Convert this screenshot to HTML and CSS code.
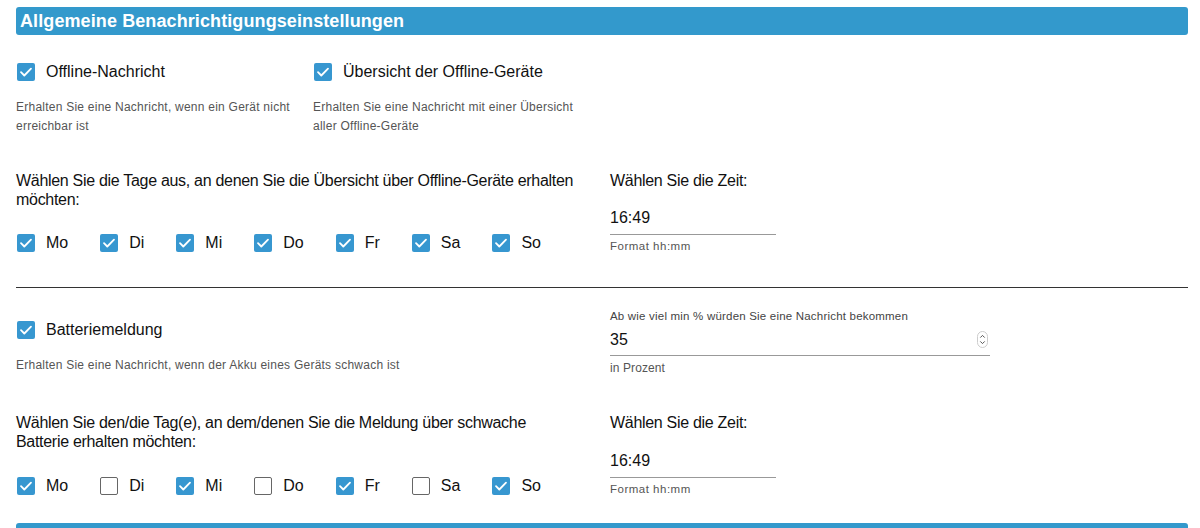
FILE: index.html
```html
<!DOCTYPE html>
<html lang="de">
<head>
  <meta charset="UTF-8">
  <meta name="viewport" content="width=device-width, initial-scale=1.0">
  <title>Benachrichtigungseinstellungen</title>
  <link rel="stylesheet" href="styles.css">
</head>
<body>

  <div class="page">
    <h2 class="section-title">Allgemeine Benachrichtigungseinstellungen</h2>

    <!-- Offline -->
    <div class="options">
      <div class="option">
        <label class="check"><span class="box checked"><svg viewBox="0 0 18 18"><path d="M4 9.2l3.3 3.3L14 5.6"/></svg></span>Offline-Nachricht</label>
        <p class="hint">Erhalten Sie eine Nachricht, wenn ein Gerät nicht erreichbar ist</p>
      </div>
      <div class="option option-wide">
        <label class="check"><span class="box checked"><svg viewBox="0 0 18 18"><path d="M4 9.2l3.3 3.3L14 5.6"/></svg></span>Übersicht der Offline-Geräte</label>
        <p class="hint">Erhalten Sie eine Nachricht mit einer Übersicht aller Offline-Geräte</p>
      </div>
    </div>

    <div class="schedule">
      <div class="days-col">
        <p class="question">Wählen Sie die Tage aus, an denen Sie die Übersicht über Offline-Geräte erhalten möchten:</p>
        <div class="days" id="days-offline"></div>
      </div>
      <div class="field-col">
        <p class="question">Wählen Sie die Zeit:</p>
        <div class="field field-time">
          <input type="text" value="16:49">
        </div>
        <div class="field-help">Format hh:mm</div>
      </div>
    </div>

    <hr class="divider">

    <!-- Batterie -->
    <div class="battery">
      <div class="battery-left">
        <label class="check"><span class="box checked"><svg viewBox="0 0 18 18"><path d="M4 9.2l3.3 3.3L14 5.6"/></svg></span>Batteriemeldung</label>
        <p class="hint">Erhalten Sie eine Nachricht, wenn der Akku eines Geräts schwach ist</p>
      </div>
      <div class="field-col">
        <div class="field-label">Ab wie viel min % würden Sie eine Nachricht bekommen</div>
        <div class="field field-number">
          <input type="text" value="35">
          <span class="spinner">
            <svg viewBox="0 0 11 17"><rect x="0.5" y="0.5" width="10" height="16" rx="5"/><path d="M3.3 6.6l2.2-2.2 2.2 2.2M3.3 10.4l2.2 2.2 2.2-2.2"/></svg>
          </span>
        </div>
        <div class="field-help help-percent">in Prozent</div>
      </div>
    </div>

    <div class="schedule schedule-battery">
      <div class="days-col">
        <p class="question">Wählen Sie den/die Tag(e), an dem/denen Sie die Meldung über schwache Batterie erhalten möchten:</p>
        <div class="days" id="days-battery"></div>
      </div>
      <div class="field-col">
        <p class="question">Wählen Sie die Zeit:</p>
        <div class="field field-time">
          <input type="text" value="16:49">
        </div>
        <div class="field-help">Format hh:mm</div>
      </div>
    </div>

    <h2 class="section-title next-title">&nbsp;</h2>
  </div>

  <script>
    const dayNames = ['Mo', 'Di', 'Mi', 'Do', 'Fr', 'Sa', 'So'];
    const check = '<svg viewBox="0 0 18 18"><path d="M4 9.2l3.3 3.3L14 5.6"/></svg>';

    // Build the day checkboxes
    function renderDays(id, selected) {
      const box = document.getElementById(id);
      dayNames.forEach((name, i) => {
        const on = selected[i];
        const label = document.createElement('label');
        label.className = 'check day';
        label.innerHTML = '<span class="box' + (on ? ' checked' : '') + '">' + (on ? check : '') + '</span>' + name;
        box.appendChild(label);
      });
    }

    renderDays('days-offline', [1, 1, 1, 1, 1, 1, 1]);
    renderDays('days-battery', [1, 0, 1, 0, 1, 0, 1]);
  </script>

</body>
</html>
```

FILE: styles.css
```css
body {
  margin: 0;
  font-family: "Liberation Sans", Arial, sans-serif;
  color: #111;
  background-color: #fff;
}

.page {
  padding: 7px 12px 0 16px;
}

p {
  margin: 0;
}

.section-title {
  margin: 0;
  height: 28px;
  line-height: 28px;
  padding-left: 4px;
  background-color: #3399cc;
  border-radius: 3px;
  color: #fff;
  font-size: 18px;
  font-weight: bold;
  letter-spacing: 0.1px;
}

.next-title {
  margin-top: 27px;
}

.check {
  display: flex;
  align-items: center;
  height: 18px;
  font-size: 16px;
  line-height: 18px;
}

.box {
  box-sizing: border-box;
  width: 18px;
  height: 18px;
  margin-left: 1px;
  margin-right: 11px;
  border: 1.5px solid #666;
  border-radius: 2px;
  background-color: #fff;
  flex-shrink: 0;
}

.box.checked {
  border: none;
  background-color: #3797d0;
}

.box svg {
  display: block;
  width: 18px;
  height: 18px;
  fill: none;
  stroke: #fff;
  stroke-width: 1.8;
  stroke-linecap: round;
  stroke-linejoin: round;
}

.hint {
  margin-top: 17px;
  font-size: 12px;
  line-height: 19px;
  color: #555;
  letter-spacing: 0.24px;
}

.options {
  display: grid;
  grid-template-columns: 297px 280px;
  margin-top: 28px;
}

.schedule {
  display: grid;
  grid-template-columns: 578px 1fr;
  column-gap: 16px;
  margin-top: 35px;
}

.schedule-battery {
  margin-top: 38px;
}

.question {
  font-size: 16px;
  line-height: 19px;
  letter-spacing: -0.3px;
}

.days-col .question {
  max-width: 562px;
}

.days {
  display: flex;
  gap: 31px;
  margin-top: 25px;
}

.schedule-battery .days {
  margin-top: 26px;
}

.field {
  position: relative;
  width: 166px;
  margin-top: 18px;
  border-bottom: 1px solid #999;
}

.schedule-battery .field {
  margin-top: 19px;
}

.field input {
  display: block;
  box-sizing: border-box;
  width: 100%;
  height: 26px;
  padding: 0 0 6px 0;
  border: none;
  outline: none;
  font-family: inherit;
  font-size: 16px;
  line-height: 20px;
  color: #111;
  background: transparent;
}

.field-help {
  margin-top: 4px;
  font-size: 11.5px;
  line-height: 14px;
  color: #555;
  letter-spacing: 0.5px;
}

.divider {
  margin: 34px 0 0 0;
  border: none;
  border-top: 1px solid #333;
}

.battery {
  display: grid;
  grid-template-columns: 578px 1fr;
  column-gap: 16px;
}

.battery-left {
  padding-top: 33px;
}

.battery .field-col {
  padding-top: 21px;
}

.field-label {
  font-size: 11.5px;
  line-height: 14px;
  color: #444;
  letter-spacing: 0.2px;
}

.field-number {
  width: 380px;
  margin-top: 7px;
}

.field-number input {
  height: 25px;
  padding-bottom: 5px;
}

.spinner {
  position: absolute;
  right: 2px;
  top: 1px;
}

.spinner svg {
  display: block;
  width: 11px;
  height: 17px;
  fill: none;
  stroke: #555;
  stroke-width: 1;
}

.spinner rect {
  stroke: #ccc;
}

.help-percent {
  font-size: 12px;
  margin-top: 5px;
  letter-spacing: 0.1px;
}
```
